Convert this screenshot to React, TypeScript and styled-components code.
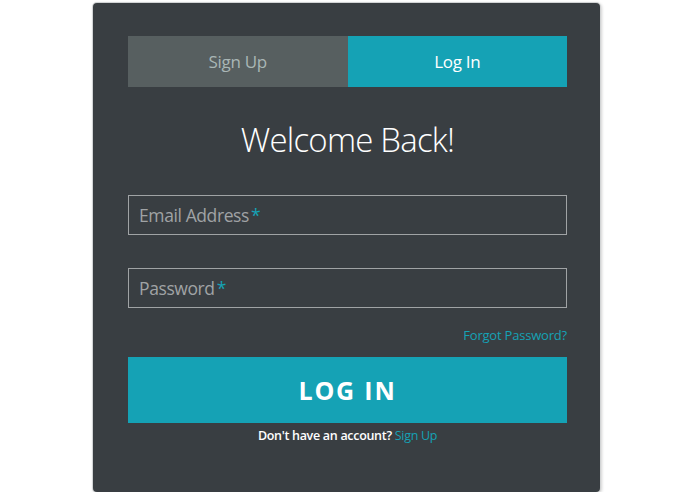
import React from "react";
import styled, { createGlobalStyle } from "styled-components";

const Global = createGlobalStyle`
  html, body { margin: 0; padding: 0; background: #ffffff; }
  body { font-family: "Open Sans", "Noto Sans", sans-serif; }
  * { box-sizing: border-box; }
`;

const Page = styled.div`
  display: flex;
  justify-content: flex-start;
  padding: 3px 0 0 93px;
`;

const Panel = styled.div`
  width: 507px;
  height: 489px;
  background: #393e42;
  border-radius: 4px;
  box-shadow: 0 0 0 1px #d2d4d5, 1px 1px 3px 1px rgba(0, 0, 0, 0.18);
  padding: 33px 33px 0 35px;
  display: flex;
  flex-direction: column;
`;

const Tabs = styled.div`
  display: grid;
  grid-template-columns: 1fr 1fr;
  height: 51px;
`;

const Tab = styled.div<{ $active?: boolean }>`
  display: flex;
  align-items: center;
  justify-content: center;
  background: ${(p) => (p.$active ? "#15a2b5" : "#575f60")};
  color: ${(p) => (p.$active ? "#ffffff" : "#a9b6b5")};
  font-size: 17px;
  font-weight: 400;
  letter-spacing: -0.3px;
`;

const Title = styled.h1`
  margin: 30px 0 0;
  text-align: center;
  color: #ffffff;
  font-size: 33px;
  line-height: 46px;
  font-weight: 300;
  letter-spacing: -0.8px;
`;

const Field = styled.div<{ $top: number }>`
  margin-top: ${(p) => p.$top}px;
  height: 40px;
  border: 1px solid #a0a3a5;
  display: flex;
  align-items: center;
  padding-left: 10px;
  color: #a0a3a5;
  font-size: 17.5px;
  letter-spacing: -0.4px;
`;

const Req = styled.span`
  color: #15a2b5;
  margin-left: 2px;
`;

const Forgot = styled.a`
  align-self: flex-end;
  margin-top: 18px;
  color: #15a2b5;
  font-size: 13px;
  line-height: 18px;
  font-weight: 500;
  text-decoration: none;
  letter-spacing: -0.2px;
`;

const Submit = styled.button`
  margin-top: 13px;
  height: 66px;
  border: none;
  background: #15a2b5;
  color: #ffffff;
  font-family: "Open Sans", "Noto Sans", sans-serif;
  font-size: 25px;
  font-weight: 700;
  letter-spacing: 1.8px;
  padding: 0;
  cursor: pointer;
`;

const Footer = styled.p`
  margin: 4px 0 0;
  text-align: center;
  color: #ffffff;
  font-size: 12.5px;
  line-height: 18px;
  font-weight: 600;
  letter-spacing: -0.3px;
`;

const FooterLink = styled.a`
  color: #15a2b5;
  font-weight: 400;
  text-decoration: none;
`;

export default function App() {
  return (
    <>
      <Global />
      <Page>
        <Panel>
          <Tabs>
            <Tab>Sign Up</Tab>
            <Tab $active>Log In</Tab>
          </Tabs>
          <Title>Welcome Back!</Title>
          <Field $top={32}>
            Email Address<Req>*</Req>
          </Field>
          <Field $top={33}>
            Password<Req>*</Req>
          </Field>
          <Forgot href="#">Forgot Password?</Forgot>
          <Submit>LOG IN</Submit>
          <Footer>
            Don't have an account? <FooterLink href="#">Sign Up</FooterLink>
          </Footer>
        </Panel>
      </Page>
    </>
  );
}
